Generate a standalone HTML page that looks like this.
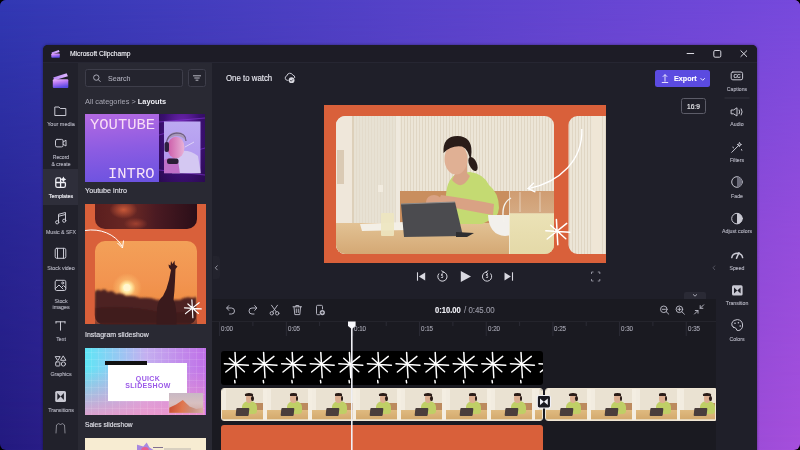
<!DOCTYPE html>
<html><head><meta charset="utf-8">
<style>
*{margin:0;padding:0;box-sizing:border-box}
html,body{width:800px;height:450px;overflow:hidden;background:#000;font-family:"Liberation Sans",sans-serif}
.a{position:absolute}
.t{position:absolute;white-space:nowrap;line-height:1;will-change:transform}
svg{position:absolute;left:0;top:0;overflow:visible}
</style></head><body>
<div class="a" style="left:0;top:0;width:800px;height:450px;border-radius:6px;overflow:hidden"><div class="a" style="left:0;top:0;width:800px;height:450px;background:linear-gradient(to right,#231a80,#5a35b8 50%,#a64fdc)"></div><div class="a" style="left:0;top:0;width:800px;height:450px;background:linear-gradient(to right,#3138b3,#5542c8 50%,#7649dc);-webkit-mask-image:linear-gradient(to bottom,#000,rgba(0,0,0,0.38) 50%,transparent);"></div></div><div class="a" style="left:43px;top:45px;width:714.00px;height:415.00px;background:#1d1c26;border-radius:5px 5px 0 0;box-shadow:0 0 3px rgba(0,0,0,0.45)"></div><div class="a" style="left:43px;top:45px;width:714.00px;height:17.00px;background:#1d1c26;border-radius:5px 5px 0 0"></div><div class="a" style="left:43px;top:62px;width:714.00px;height:1.00px;background:#262632"></div><div class="a" style="left:43px;top:63px;width:35.00px;height:387.00px;background:#21212b"></div><div class="a" style="left:78px;top:63px;width:134.00px;height:387.00px;background:#292933"></div><div class="a" style="left:212px;top:63px;width:504.00px;height:236.00px;background:#1f1f29"></div><div class="a" style="left:212px;top:299px;width:504.00px;height:151.00px;background:#1a1a21"></div><div class="a" style="left:716px;top:63px;width:41.00px;height:387.00px;background:#1f1f29"></div><div class="t" style="left:69.70px;top:50.58px;font-size:6.7px;color:#f0f0f6;font-weight:400;font-family:'Liberation Sans';transform:scaleY(1.08);transform-origin:0 5.67px;-webkit-text-stroke:0.12px #f0f0f6;">Microsoft Clipchamp</div><div class="a" style="left:43px;top:169px;width:35.00px;height:36.00px;background:#2e2e3a"></div><div class="t" style="left:0.50px;width:120px;text-align:center;top:122.24px;font-size:5.5px;color:#b4b4c0;font-weight:400;font-family:'Liberation Sans';transform:scaleY(1.08);transform-origin:0 4.66px;-webkit-text-stroke:0.12px #b4b4c0;">Your media</div><div class="t" style="left:0.50px;width:120px;text-align:center;top:154.98px;font-size:5.1px;color:#b4b4c0;font-weight:400;font-family:'Liberation Sans';transform:scaleY(1.08);transform-origin:0 4.32px;-webkit-text-stroke:0.12px #b4b4c0;">Record</div><div class="t" style="left:0.50px;width:120px;text-align:center;top:161.88px;font-size:5.1px;color:#b4b4c0;font-weight:400;font-family:'Liberation Sans';transform:scaleY(1.08);transform-origin:0 4.32px;-webkit-text-stroke:0.12px #b4b4c0;">&amp; create</div><div class="t" style="left:0.50px;width:120px;text-align:center;top:194.33px;font-size:5.4px;color:#f0f0f6;font-weight:400;font-family:'Liberation Sans';transform:scaleY(1.08);transform-origin:0 4.57px;-webkit-text-stroke:0.12px #f0f0f6;">Templates</div><div class="t" style="left:0.50px;width:120px;text-align:center;top:229.80px;font-size:5.2px;color:#b4b4c0;font-weight:400;font-family:'Liberation Sans';transform:scaleY(1.08);transform-origin:0 4.40px;-webkit-text-stroke:0.12px #b4b4c0;">Music &amp; SFX</div><div class="t" style="left:0.50px;width:120px;text-align:center;top:266.11px;font-size:5.3px;color:#b4b4c0;font-weight:400;font-family:'Liberation Sans';transform:scaleY(1.08);transform-origin:0 4.49px;-webkit-text-stroke:0.12px #b4b4c0;">Stock video</div><div class="t" style="left:0.50px;width:120px;text-align:center;top:298.61px;font-size:5.3px;color:#b4b4c0;font-weight:400;font-family:'Liberation Sans';transform:scaleY(1.08);transform-origin:0 4.49px;-webkit-text-stroke:0.12px #b4b4c0;">Stock</div><div class="t" style="left:0.50px;width:120px;text-align:center;top:304.81px;font-size:5.3px;color:#b4b4c0;font-weight:400;font-family:'Liberation Sans';transform:scaleY(1.08);transform-origin:0 4.49px;-webkit-text-stroke:0.12px #b4b4c0;">images</div><div class="t" style="left:0.50px;width:120px;text-align:center;top:337.01px;font-size:5.3px;color:#b4b4c0;font-weight:400;font-family:'Liberation Sans';transform:scaleY(1.08);transform-origin:0 4.49px;-webkit-text-stroke:0.12px #b4b4c0;">Text</div><div class="t" style="left:0.50px;width:120px;text-align:center;top:371.91px;font-size:5.3px;color:#b4b4c0;font-weight:400;font-family:'Liberation Sans';transform:scaleY(1.08);transform-origin:0 4.49px;-webkit-text-stroke:0.12px #b4b4c0;">Graphics</div><div class="t" style="left:0.50px;width:120px;text-align:center;top:407.81px;font-size:5.3px;color:#b4b4c0;font-weight:400;font-family:'Liberation Sans';transform:scaleY(1.08);transform-origin:0 4.49px;-webkit-text-stroke:0.12px #b4b4c0;">Transitions</div><div class="a" style="left:85px;top:69px;width:98.00px;height:18.30px;background:#24242e;border:1px solid #3e3e4a;border-radius:2.5px"></div><div class="t" style="left:107.75px;top:75.99px;font-size:7.1px;color:#a8a8b4;font-weight:400;font-family:'Liberation Sans';transform:scaleY(1.08);transform-origin:0 6.01px;-webkit-text-stroke:0.12px #a8a8b4;">Search</div><div class="a" style="left:188.3px;top:69px;width:17.50px;height:18.30px;background:#24242e;border:1px solid #3e3e4a;border-radius:2.5px"></div><div class="t" style="left:85px;top:97.74px;font-size:7.4px;color:#a8a8b4">All categories &gt; <span style="color:#f0f0f6;font-weight:700">Layouts</span></div><div class="t" style="left:85.00px;top:186.81px;font-size:7.2px;color:#e0e0e8;font-weight:400;font-family:'Liberation Sans';transform:scaleY(1.08);transform-origin:0 6.09px;-webkit-text-stroke:0.12px #e0e0e8;">Youtube intro</div><div class="t" style="left:85.00px;top:331.07px;font-size:7.0px;color:#e0e0e8;font-weight:400;font-family:'Liberation Sans';transform:scaleY(1.08);transform-origin:0 5.93px;-webkit-text-stroke:0.12px #e0e0e8;">Instagram slideshow</div><div class="t" style="left:85.00px;top:421.67px;font-size:6.65px;color:#e0e0e8;font-weight:400;font-family:'Liberation Sans';transform:scaleY(1.08);transform-origin:0 5.63px;-webkit-text-stroke:0.12px #e0e0e8;">Sales slideshow</div><div class="a" style="left:85px;top:114px;width:120.00px;height:67.50px;overflow:hidden;background:#34106a"><div class="a" style="left:0px;top:0px;width:74px;height:67.5px;background:linear-gradient(175deg,#b46ae2,#8c5ce2 50%,#6a52e0)"></div><div class="a" style="left:74px;top:0px;width:46px;height:67.5px;background:radial-gradient(ellipse at 50% 30%,#7a2ac0,#3a0f70 60%,#2a0a50)"></div></div><svg width="800" height="450" viewBox="0 0 800 450"><defs><linearGradient id="ytp" x1="0" y1="0" x2="0" y2="1"><stop offset="0" stop-color="#bcaaf2"/><stop offset="0.6" stop-color="#b49cf0"/><stop offset="1" stop-color="#b890e8"/></linearGradient><clipPath id="ytc"><rect x="164" y="121.3" width="36.7" height="52"/></clipPath></defs><path d="M159,122 L205,118 M159,170 L205,175 M159,135 L166,133 M198,150 L205,148" stroke="#8a3ae0" stroke-width="0.8" opacity="0.7"/><g clip-path="url(#ytc)"><rect x="164" y="121.3" width="36.7" height="52" fill="url(#ytp)"/><path d="M176,152 Q188,148 198,156 L201,174 L172,174 Z" fill="#d4c8f2"/><path d="M164,160 Q170,156 178,160 L180,174 L164,174 Z" fill="#c070c8"/><linearGradient id="ytf" x1="0" y1="0" x2="1" y2="0"><stop offset="0" stop-color="#cc5aa8"/><stop offset="1" stop-color="#e8b4d8"/></linearGradient><ellipse cx="176" cy="147.5" rx="8.5" ry="10.8" fill="url(#ytf)"/><path d="M167,141 Q168,132 177,132 Q186,132 186,141 Q182,136 177,136 Q171,136 167,141 Z" fill="#a898b8"/><path d="M166.5,146 Q166,134 176.5,133 Q186,133 186,141" stroke="#6a5a80" stroke-width="1.2" fill="none"/><rect x="164.5" y="142" width="4.5" height="10" rx="2" fill="#2e2040"/><path d="M185,147 L194,142" stroke="#e8e0f8" stroke-width="0.8"/><rect x="167" y="158.5" width="11.5" height="5.5" rx="2" fill="#2a1e36"/></g></svg><div class="t" style="left:89.60px;top:118.08px;font-size:15.5px;color:#f8dcf6;font-weight:400;font-family:'Liberation Mono';">YOUTUBE</div><div class="t" style="left:108.00px;top:166.68px;font-size:15.5px;color:#f8e4f8;font-weight:400;font-family:'Liberation Mono';">INTRO</div><div class="a" style="left:85px;top:204.3px;width:120.80px;height:120.20px;overflow:hidden;background:#d9603a"><div class="a" style="left:9.6px;top:-10px;width:102px;height:34.4px;border-radius:0 0 10px 10px;background:radial-gradient(ellipse 14px 9px at 28% 45%,#c85838,rgba(160,60,40,0) 100%),radial-gradient(ellipse 12px 6px at 40% 85%,#a04030,rgba(160,60,40,0) 100%),linear-gradient(90deg,#5a1e1e,#6a2824 35%,#4a1a22 60%,#2a0e18)"></div><div class="a" style="left:9.6px;top:36.7px;width:102px;height:90px;border-radius:10px 10px 0 0;background:linear-gradient(#f3a058,#f29450 45%,#f09048 62%,#c86038 78%,#5a2a28)"></div><div class="a" style="left:26.9px;top:68.4px;width:30px;height:30px;border-radius:50%;background:radial-gradient(#fffbe8,#ffe8a0 22%,rgba(255,200,120,0.5) 40%,rgba(255,170,90,0) 70%)"></div></div><div class="a" style="left:85px;top:348px;width:120.60px;height:67.00px;overflow:hidden;background:linear-gradient(90deg,#5ee6f6,#c4b0f0 50%,#c070e8)"><div class="a" style="left:0px;top:0px;width:120px;height:67px;background:linear-gradient(to bottom,rgba(240,160,200,0) 30%,rgba(240,150,200,0.85))"></div><div class="a" style="left:0px;top:0px;width:120px;height:67px;background:repeating-linear-gradient(90deg,rgba(255,255,255,0) 0 6px,rgba(255,255,255,0.10) 6px 7px),repeating-linear-gradient(0deg,rgba(255,255,255,0) 0 6px,rgba(255,255,255,0.10) 6px 7px)"></div><div class="a" style="left:22.7px;top:14.8px;width:79.5px;height:38.2px;background:#fff"></div><div class="a" style="left:19.8px;top:12.7px;width:42.7px;height:4.1px;background:#111"></div><div class="a" style="left:84.3px;top:44.8px;width:33.8px;height:20px;background:linear-gradient(#c8b8c4,#d8c0c0 50%,#d0a8a0)"></div><div class="a" style="left:84.3px;top:52px;width:33.8px;height:12.8px;background:linear-gradient(100deg,#c84a30,#e07850 40%,#c89080 70%,#d8b0a8);clip-path:polygon(0 100%,0 60%,20% 35%,40% 0,60% 50%,80% 70%,100% 60%,100% 100%)"></div></div><div class="t" style="left:87.5px;width:120px;text-align:center;top:376.2px;font-size:7px;line-height:6.6px;color:#9a58e8;font-weight:700;letter-spacing:0.35px">QUICK<br>SLIDESHOW</div><div class="a" style="left:85px;top:438.4px;width:120.60px;height:21.60px;background:#f7ecd2"><div class="a" style="left:51.5px;top:4px;width:17px;height:14px;background:#a888e0;clip-path:polygon(0 15%,40% 30%,60% 0,75% 35%,100% 55%,100% 100%,0 100%)"></div><div class="a" style="left:56px;top:9px;width:8px;height:8px;background:#e86090;border-radius:50%"></div><div class="a" style="left:68px;top:8.5px;width:10px;height:1.2px;background:#807090"></div><div class="a" style="left:79px;top:10px;width:27px;height:3px;background:#d8d0c0"></div></div><div class="t" style="left:225.75px;top:74.85px;font-size:7.85px;color:#e8e8f0;font-weight:400;font-family:'Liberation Sans';transform:scaleY(1.08);transform-origin:0 6.65px;-webkit-text-stroke:0.12px #e8e8f0;">One to watch</div><div class="a" style="left:654.7px;top:69.6px;width:55.60px;height:17.40px;background:#5b4be0;border-radius:2.5px"></div><div class="t" style="left:674.00px;top:75.21px;font-size:7.2px;color:#ffffff;font-weight:700;font-family:'Liberation Sans';transform:scaleY(1.08);transform-origin:0 6.09px;-webkit-text-stroke:0.12px #ffffff;">Export</div><div class="a" style="left:680.7px;top:98.3px;width:25.60px;height:16.10px;border:1px solid #5c5c68;border-radius:2.5px"></div><div class="t" style="left:686.80px;top:104.21px;font-size:6.6px;color:#f0f0f4;font-weight:400;font-family:'Liberation Sans';transform:scaleY(1.08);transform-origin:0 5.59px;-webkit-text-stroke:0.12px #f0f0f4;">16:9</div><div class="a" style="left:324px;top:105px;width:282.00px;height:158.00px;background:#d9603a"></div><svg width="800" height="450" viewBox="0 0 800 450"><defs><clipPath id="p1"><rect x="336" y="116" width="218" height="138" rx="9"/></clipPath><clipPath id="p2"><path d="M577.5,116 H606 V254 H577.5 A9,9 0 0 1 568.5,245 V125 A9,9 0 0 1 577.5,116 Z"/></clipPath><pattern id="str" x="0" y="0" width="3" height="10" patternUnits="userSpaceOnUse"><rect x="0" y="0" width="3" height="10" fill="#ece5d7"/><rect x="2" y="0" width="1" height="10" fill="#e0d6c4"/></pattern><linearGradient id="tbl" x1="0" y1="0" x2="0" y2="1"><stop offset="0" stop-color="#e2c294"/><stop offset="1" stop-color="#d4a874"/></linearGradient><linearGradient id="jug" x1="0" y1="0" x2="0" y2="1"><stop offset="0" stop-color="#f4f0e0" stop-opacity="0.15"/><stop offset="0.35" stop-color="#f0ecd8" stop-opacity="0.3"/><stop offset="0.36" stop-color="#ebe2b6"/><stop offset="1" stop-color="#e4d9a8"/></linearGradient></defs><g clip-path="url(#p1)"><rect x="336" y="116" width="218" height="138" fill="url(#str)"/><rect x="336" y="116" width="16" height="138" fill="#efe7da"/><rect x="352" y="116" width="2" height="138" fill="#ddd0ba"/><rect x="337" y="150" width="7" height="34" fill="#c9b396" opacity="0.55"/><rect x="354" y="116" width="44" height="110" fill="#e4ddd0" opacity="0.6"/><rect x="396" y="116" width="4" height="110" fill="#efe9de"/><rect x="400" y="191" width="154" height="32" fill="#c98e5e"/><rect x="336" y="223" width="218" height="31" fill="url(#tbl)"/><path d="M360,224 L404,222 L408,230 L362,231 Z" fill="#f3efe6"/><rect x="381" y="213" width="13" height="23" rx="1" fill="#ede6c0" opacity="0.9"/><rect x="378" y="185" width="5" height="7" fill="#f2ece0"/><ellipse cx="473" cy="164" rx="3.8" ry="7.5" transform="rotate(-25 473 164)" fill="#2a1c18"/><path d="M446,224 L446,195 Q447,178 458,173 L470,172 Q484,174 489,185 Q499,193 499,208 Q498,220 488,221 L482,224 Z" fill="#c4da72"/><path d="M452,180 Q462,192 470,176 L466,172 L456,172 Z" fill="#d7a486"/><rect x="455" y="163" width="12" height="14" fill="#d7a486"/><ellipse cx="456" cy="159" rx="11.5" ry="15.5" fill="#e0b094"/><path d="M443.5,153 Q442.5,136 457.5,136 Q472,136.5 471.5,152 L470.5,163 Q469,149 462,146.5 Q451,145 443.5,153 Z" fill="#2a1c18"/><path d="M494,204 Q470,199 441,195 L437,204 Q468,211 493,215 Z" fill="#d9a284"/><ellipse cx="434" cy="202" rx="8" ry="7" fill="#d9a284"/><path d="M401,204 L455,202 L463,236 L404,237 Z" fill="#4b4b4f"/><path d="M401,204 L455,202" stroke="#8c8c8c" stroke-width="1.2"/><path d="M456,232 L474,233 L467,237 L456,237 Z" fill="#2e2e30"/><path d="M488,215 H521 Q521,235 505,236 Q489,235 488,215 Z" fill="#f2f0ec"/><rect x="509" y="191" width="46" height="63" fill="url(#jug)"/><path d="M509.5,191 V254 M520,192 V212 M540,192 V212" stroke="#f8f6f0" stroke-width="0.8" opacity="0.7"/><path d="M511,198 Q500,204 504,222" stroke="#f4f2ec" stroke-width="1.4" fill="none"/></g><g clip-path="url(#p2)"><rect x="568" y="116" width="38" height="138" fill="url(#str)"/><rect x="592" y="116" width="9" height="138" fill="#efe6d6"/></g></svg><div class="a" style="left:212.7px;top:256px;width:7.30px;height:22.70px;background:#23232d;border-radius:0 3px 3px 0"></div><div class="t" style="left:434.75px;top:306.82px;font-size:7.6px;color:#f0f0f6;font-weight:700;font-family:'Liberation Sans';transform:scaleY(1.08);transform-origin:0 6.43px;-webkit-text-stroke:0.12px #f0f0f6;">0:10.00</div><div class="t" style="left:463.75px;top:306.56px;font-size:7.9px;color:#9a9aa6;font-weight:400;font-family:'Liberation Sans';transform:scaleY(1.08);transform-origin:0 6.69px;-webkit-text-stroke:0.12px #9a9aa6;">/ 0:45.00</div><div class="a" style="left:684px;top:292px;width:22.00px;height:7.00px;background:#2a2a35;border-radius:2px 2px 0 0"></div><div class="a" style="left:212px;top:321px;width:504.00px;height:1.00px;background:#24242c"></div><div class="t" style="left:221.00px;top:326.15px;font-size:6.2px;color:#a4a4b0;font-weight:400;font-family:'Liberation Sans';transform:scaleY(1.08);transform-origin:0 5.25px;-webkit-text-stroke:0.12px #a4a4b0;">0:00</div><div class="t" style="left:287.67px;top:326.15px;font-size:6.2px;color:#a4a4b0;font-weight:400;font-family:'Liberation Sans';transform:scaleY(1.08);transform-origin:0 5.25px;-webkit-text-stroke:0.12px #a4a4b0;">0:05</div><div class="t" style="left:354.34px;top:326.15px;font-size:6.2px;color:#a4a4b0;font-weight:400;font-family:'Liberation Sans';transform:scaleY(1.08);transform-origin:0 5.25px;-webkit-text-stroke:0.12px #a4a4b0;">0:10</div><div class="t" style="left:421.01px;top:326.15px;font-size:6.2px;color:#a4a4b0;font-weight:400;font-family:'Liberation Sans';transform:scaleY(1.08);transform-origin:0 5.25px;-webkit-text-stroke:0.12px #a4a4b0;">0:15</div><div class="t" style="left:487.68px;top:326.15px;font-size:6.2px;color:#a4a4b0;font-weight:400;font-family:'Liberation Sans';transform:scaleY(1.08);transform-origin:0 5.25px;-webkit-text-stroke:0.12px #a4a4b0;">0:20</div><div class="t" style="left:554.35px;top:326.15px;font-size:6.2px;color:#a4a4b0;font-weight:400;font-family:'Liberation Sans';transform:scaleY(1.08);transform-origin:0 5.25px;-webkit-text-stroke:0.12px #a4a4b0;">0:25</div><div class="t" style="left:621.02px;top:326.15px;font-size:6.2px;color:#a4a4b0;font-weight:400;font-family:'Liberation Sans';transform:scaleY(1.08);transform-origin:0 5.25px;-webkit-text-stroke:0.12px #a4a4b0;">0:30</div><div class="t" style="left:687.69px;top:326.15px;font-size:6.2px;color:#a4a4b0;font-weight:400;font-family:'Liberation Sans';transform:scaleY(1.08);transform-origin:0 5.25px;-webkit-text-stroke:0.12px #a4a4b0;">0:35</div><div class="a" style="left:221px;top:351px;width:322.00px;height:33.50px;background:#000;border-radius:3px"></div><div class="a" style="left:221px;top:425px;width:321.50px;height:30.00px;background:#d9603a;border-radius:3px"></div><div class="a" style="left:221px;top:388px;width:321.50px;height:32.70px;border-radius:3px;overflow:hidden;border:1px solid #f0e6d4"><div class="a" style="left:0.00px;top:0;width:45.25px;height:33px;overflow:hidden;background:#eae2d2"><div class="a" style="left:0px;top:0px;width:4px;height:33px;background:#f2ece0"></div><div class="a" style="left:32px;top:14px;width:13px;height:7px;background:#bc8a5e"></div><div class="a" style="left:0px;top:21px;width:46px;height:9px;background:linear-gradient(#dfba80,#d4aa6e)"></div><div class="a" style="left:0px;top:29.5px;width:46px;height:4px;background:#e6d6b8"></div><div class="a" style="left:20px;top:12px;width:15px;height:13px;border-radius:45% 45% 25% 25%;background:#bfcf66"></div><div class="a" style="left:23.5px;top:5px;width:6.5px;height:8.5px;border-radius:50%;background:#dcae90"></div><div class="a" style="left:23px;top:4.3px;width:7.5px;height:3.2px;border-radius:50% 50% 10% 10%;background:#2a1c18"></div><div class="a" style="left:29px;top:7px;width:2.6px;height:5px;border-radius:50%;background:#2a1c18"></div><div class="a" style="left:14px;top:18.5px;width:13px;height:8px;background:#4a3e3c;border-radius:1px;transform:skewX(-6deg)"></div><div class="a" style="left:41px;top:0px;width:4px;height:33px;background:#f4eee2"></div></div><div class="a" style="left:44.75px;top:0;width:45.25px;height:33px;overflow:hidden;background:#eae2d2"><div class="a" style="left:0px;top:0px;width:4px;height:33px;background:#f2ece0"></div><div class="a" style="left:32px;top:14px;width:13px;height:7px;background:#bc8a5e"></div><div class="a" style="left:0px;top:21px;width:46px;height:9px;background:linear-gradient(#dfba80,#d4aa6e)"></div><div class="a" style="left:0px;top:29.5px;width:46px;height:4px;background:#e6d6b8"></div><div class="a" style="left:20px;top:12px;width:15px;height:13px;border-radius:45% 45% 25% 25%;background:#bfcf66"></div><div class="a" style="left:23.5px;top:5px;width:6.5px;height:8.5px;border-radius:50%;background:#dcae90"></div><div class="a" style="left:23px;top:4.3px;width:7.5px;height:3.2px;border-radius:50% 50% 10% 10%;background:#2a1c18"></div><div class="a" style="left:29px;top:7px;width:2.6px;height:5px;border-radius:50%;background:#2a1c18"></div><div class="a" style="left:14px;top:18.5px;width:13px;height:8px;background:#4a3e3c;border-radius:1px;transform:skewX(-6deg)"></div><div class="a" style="left:41px;top:0px;width:4px;height:33px;background:#f4eee2"></div></div><div class="a" style="left:89.50px;top:0;width:45.25px;height:33px;overflow:hidden;background:#eae2d2"><div class="a" style="left:0px;top:0px;width:4px;height:33px;background:#f2ece0"></div><div class="a" style="left:32px;top:14px;width:13px;height:7px;background:#bc8a5e"></div><div class="a" style="left:0px;top:21px;width:46px;height:9px;background:linear-gradient(#dfba80,#d4aa6e)"></div><div class="a" style="left:0px;top:29.5px;width:46px;height:4px;background:#e6d6b8"></div><div class="a" style="left:20px;top:12px;width:15px;height:13px;border-radius:45% 45% 25% 25%;background:#bfcf66"></div><div class="a" style="left:23.5px;top:5px;width:6.5px;height:8.5px;border-radius:50%;background:#dcae90"></div><div class="a" style="left:23px;top:4.3px;width:7.5px;height:3.2px;border-radius:50% 50% 10% 10%;background:#2a1c18"></div><div class="a" style="left:29px;top:7px;width:2.6px;height:5px;border-radius:50%;background:#2a1c18"></div><div class="a" style="left:14px;top:18.5px;width:13px;height:8px;background:#4a3e3c;border-radius:1px;transform:skewX(-6deg)"></div><div class="a" style="left:41px;top:0px;width:4px;height:33px;background:#f4eee2"></div></div><div class="a" style="left:134.25px;top:0;width:45.25px;height:33px;overflow:hidden;background:#eae2d2"><div class="a" style="left:0px;top:0px;width:4px;height:33px;background:#f2ece0"></div><div class="a" style="left:32px;top:14px;width:13px;height:7px;background:#bc8a5e"></div><div class="a" style="left:0px;top:21px;width:46px;height:9px;background:linear-gradient(#dfba80,#d4aa6e)"></div><div class="a" style="left:0px;top:29.5px;width:46px;height:4px;background:#e6d6b8"></div><div class="a" style="left:20px;top:12px;width:15px;height:13px;border-radius:45% 45% 25% 25%;background:#bfcf66"></div><div class="a" style="left:23.5px;top:5px;width:6.5px;height:8.5px;border-radius:50%;background:#dcae90"></div><div class="a" style="left:23px;top:4.3px;width:7.5px;height:3.2px;border-radius:50% 50% 10% 10%;background:#2a1c18"></div><div class="a" style="left:29px;top:7px;width:2.6px;height:5px;border-radius:50%;background:#2a1c18"></div><div class="a" style="left:14px;top:18.5px;width:13px;height:8px;background:#4a3e3c;border-radius:1px;transform:skewX(-6deg)"></div><div class="a" style="left:41px;top:0px;width:4px;height:33px;background:#f4eee2"></div></div><div class="a" style="left:179.00px;top:0;width:45.25px;height:33px;overflow:hidden;background:#eae2d2"><div class="a" style="left:0px;top:0px;width:4px;height:33px;background:#f2ece0"></div><div class="a" style="left:32px;top:14px;width:13px;height:7px;background:#bc8a5e"></div><div class="a" style="left:0px;top:21px;width:46px;height:9px;background:linear-gradient(#dfba80,#d4aa6e)"></div><div class="a" style="left:0px;top:29.5px;width:46px;height:4px;background:#e6d6b8"></div><div class="a" style="left:20px;top:12px;width:15px;height:13px;border-radius:45% 45% 25% 25%;background:#bfcf66"></div><div class="a" style="left:23.5px;top:5px;width:6.5px;height:8.5px;border-radius:50%;background:#dcae90"></div><div class="a" style="left:23px;top:4.3px;width:7.5px;height:3.2px;border-radius:50% 50% 10% 10%;background:#2a1c18"></div><div class="a" style="left:29px;top:7px;width:2.6px;height:5px;border-radius:50%;background:#2a1c18"></div><div class="a" style="left:14px;top:18.5px;width:13px;height:8px;background:#4a3e3c;border-radius:1px;transform:skewX(-6deg)"></div><div class="a" style="left:41px;top:0px;width:4px;height:33px;background:#f4eee2"></div></div><div class="a" style="left:223.75px;top:0;width:45.25px;height:33px;overflow:hidden;background:#eae2d2"><div class="a" style="left:0px;top:0px;width:4px;height:33px;background:#f2ece0"></div><div class="a" style="left:32px;top:14px;width:13px;height:7px;background:#bc8a5e"></div><div class="a" style="left:0px;top:21px;width:46px;height:9px;background:linear-gradient(#dfba80,#d4aa6e)"></div><div class="a" style="left:0px;top:29.5px;width:46px;height:4px;background:#e6d6b8"></div><div class="a" style="left:20px;top:12px;width:15px;height:13px;border-radius:45% 45% 25% 25%;background:#bfcf66"></div><div class="a" style="left:23.5px;top:5px;width:6.5px;height:8.5px;border-radius:50%;background:#dcae90"></div><div class="a" style="left:23px;top:4.3px;width:7.5px;height:3.2px;border-radius:50% 50% 10% 10%;background:#2a1c18"></div><div class="a" style="left:29px;top:7px;width:2.6px;height:5px;border-radius:50%;background:#2a1c18"></div><div class="a" style="left:14px;top:18.5px;width:13px;height:8px;background:#4a3e3c;border-radius:1px;transform:skewX(-6deg)"></div><div class="a" style="left:41px;top:0px;width:4px;height:33px;background:#f4eee2"></div></div><div class="a" style="left:268.50px;top:0;width:45.25px;height:33px;overflow:hidden;background:#eae2d2"><div class="a" style="left:0px;top:0px;width:4px;height:33px;background:#f2ece0"></div><div class="a" style="left:32px;top:14px;width:13px;height:7px;background:#bc8a5e"></div><div class="a" style="left:0px;top:21px;width:46px;height:9px;background:linear-gradient(#dfba80,#d4aa6e)"></div><div class="a" style="left:0px;top:29.5px;width:46px;height:4px;background:#e6d6b8"></div><div class="a" style="left:20px;top:12px;width:15px;height:13px;border-radius:45% 45% 25% 25%;background:#bfcf66"></div><div class="a" style="left:23.5px;top:5px;width:6.5px;height:8.5px;border-radius:50%;background:#dcae90"></div><div class="a" style="left:23px;top:4.3px;width:7.5px;height:3.2px;border-radius:50% 50% 10% 10%;background:#2a1c18"></div><div class="a" style="left:29px;top:7px;width:2.6px;height:5px;border-radius:50%;background:#2a1c18"></div><div class="a" style="left:14px;top:18.5px;width:13px;height:8px;background:#4a3e3c;border-radius:1px;transform:skewX(-6deg)"></div><div class="a" style="left:41px;top:0px;width:4px;height:33px;background:#f4eee2"></div></div><div class="a" style="left:313.25px;top:0;width:45.25px;height:33px;overflow:hidden;background:#eae2d2"><div class="a" style="left:0px;top:0px;width:4px;height:33px;background:#f2ece0"></div><div class="a" style="left:32px;top:14px;width:13px;height:7px;background:#bc8a5e"></div><div class="a" style="left:0px;top:21px;width:46px;height:9px;background:linear-gradient(#dfba80,#d4aa6e)"></div><div class="a" style="left:0px;top:29.5px;width:46px;height:4px;background:#e6d6b8"></div><div class="a" style="left:20px;top:12px;width:15px;height:13px;border-radius:45% 45% 25% 25%;background:#bfcf66"></div><div class="a" style="left:23.5px;top:5px;width:6.5px;height:8.5px;border-radius:50%;background:#dcae90"></div><div class="a" style="left:23px;top:4.3px;width:7.5px;height:3.2px;border-radius:50% 50% 10% 10%;background:#2a1c18"></div><div class="a" style="left:29px;top:7px;width:2.6px;height:5px;border-radius:50%;background:#2a1c18"></div><div class="a" style="left:14px;top:18.5px;width:13px;height:8px;background:#4a3e3c;border-radius:1px;transform:skewX(-6deg)"></div><div class="a" style="left:41px;top:0px;width:4px;height:33px;background:#f4eee2"></div></div></div><div class="a" style="left:545px;top:388px;width:171.00px;height:32.70px;border-radius:3px 0 0 3px;overflow:hidden;border:1px solid #f0e6d4"><div class="a" style="left:0.00px;top:0;width:45.25px;height:33px;overflow:hidden;background:#eae2d2"><div class="a" style="left:0px;top:0px;width:4px;height:33px;background:#f2ece0"></div><div class="a" style="left:32px;top:14px;width:13px;height:7px;background:#bc8a5e"></div><div class="a" style="left:0px;top:21px;width:46px;height:9px;background:linear-gradient(#dfba80,#d4aa6e)"></div><div class="a" style="left:0px;top:29.5px;width:46px;height:4px;background:#e6d6b8"></div><div class="a" style="left:20px;top:12px;width:15px;height:13px;border-radius:45% 45% 25% 25%;background:#bfcf66"></div><div class="a" style="left:23.5px;top:5px;width:6.5px;height:8.5px;border-radius:50%;background:#dcae90"></div><div class="a" style="left:23px;top:4.3px;width:7.5px;height:3.2px;border-radius:50% 50% 10% 10%;background:#2a1c18"></div><div class="a" style="left:29px;top:7px;width:2.6px;height:5px;border-radius:50%;background:#2a1c18"></div><div class="a" style="left:14px;top:18.5px;width:13px;height:8px;background:#4a3e3c;border-radius:1px;transform:skewX(-6deg)"></div><div class="a" style="left:41px;top:0px;width:4px;height:33px;background:#f4eee2"></div></div><div class="a" style="left:44.75px;top:0;width:45.25px;height:33px;overflow:hidden;background:#eae2d2"><div class="a" style="left:0px;top:0px;width:4px;height:33px;background:#f2ece0"></div><div class="a" style="left:32px;top:14px;width:13px;height:7px;background:#bc8a5e"></div><div class="a" style="left:0px;top:21px;width:46px;height:9px;background:linear-gradient(#dfba80,#d4aa6e)"></div><div class="a" style="left:0px;top:29.5px;width:46px;height:4px;background:#e6d6b8"></div><div class="a" style="left:20px;top:12px;width:15px;height:13px;border-radius:45% 45% 25% 25%;background:#bfcf66"></div><div class="a" style="left:23.5px;top:5px;width:6.5px;height:8.5px;border-radius:50%;background:#dcae90"></div><div class="a" style="left:23px;top:4.3px;width:7.5px;height:3.2px;border-radius:50% 50% 10% 10%;background:#2a1c18"></div><div class="a" style="left:29px;top:7px;width:2.6px;height:5px;border-radius:50%;background:#2a1c18"></div><div class="a" style="left:14px;top:18.5px;width:13px;height:8px;background:#4a3e3c;border-radius:1px;transform:skewX(-6deg)"></div><div class="a" style="left:41px;top:0px;width:4px;height:33px;background:#f4eee2"></div></div><div class="a" style="left:89.50px;top:0;width:45.25px;height:33px;overflow:hidden;background:#eae2d2"><div class="a" style="left:0px;top:0px;width:4px;height:33px;background:#f2ece0"></div><div class="a" style="left:32px;top:14px;width:13px;height:7px;background:#bc8a5e"></div><div class="a" style="left:0px;top:21px;width:46px;height:9px;background:linear-gradient(#dfba80,#d4aa6e)"></div><div class="a" style="left:0px;top:29.5px;width:46px;height:4px;background:#e6d6b8"></div><div class="a" style="left:20px;top:12px;width:15px;height:13px;border-radius:45% 45% 25% 25%;background:#bfcf66"></div><div class="a" style="left:23.5px;top:5px;width:6.5px;height:8.5px;border-radius:50%;background:#dcae90"></div><div class="a" style="left:23px;top:4.3px;width:7.5px;height:3.2px;border-radius:50% 50% 10% 10%;background:#2a1c18"></div><div class="a" style="left:29px;top:7px;width:2.6px;height:5px;border-radius:50%;background:#2a1c18"></div><div class="a" style="left:14px;top:18.5px;width:13px;height:8px;background:#4a3e3c;border-radius:1px;transform:skewX(-6deg)"></div><div class="a" style="left:41px;top:0px;width:4px;height:33px;background:#f4eee2"></div></div><div class="a" style="left:134.25px;top:0;width:45.25px;height:33px;overflow:hidden;background:#eae2d2"><div class="a" style="left:0px;top:0px;width:4px;height:33px;background:#f2ece0"></div><div class="a" style="left:32px;top:14px;width:13px;height:7px;background:#bc8a5e"></div><div class="a" style="left:0px;top:21px;width:46px;height:9px;background:linear-gradient(#dfba80,#d4aa6e)"></div><div class="a" style="left:0px;top:29.5px;width:46px;height:4px;background:#e6d6b8"></div><div class="a" style="left:20px;top:12px;width:15px;height:13px;border-radius:45% 45% 25% 25%;background:#bfcf66"></div><div class="a" style="left:23.5px;top:5px;width:6.5px;height:8.5px;border-radius:50%;background:#dcae90"></div><div class="a" style="left:23px;top:4.3px;width:7.5px;height:3.2px;border-radius:50% 50% 10% 10%;background:#2a1c18"></div><div class="a" style="left:29px;top:7px;width:2.6px;height:5px;border-radius:50%;background:#2a1c18"></div><div class="a" style="left:14px;top:18.5px;width:13px;height:8px;background:#4a3e3c;border-radius:1px;transform:skewX(-6deg)"></div><div class="a" style="left:41px;top:0px;width:4px;height:33px;background:#f4eee2"></div></div></div><div class="t" style="left:382.00px;width:120px;text-align:center;top:275.41px;font-size:4.6px;color:#d8d8e0;font-weight:400;font-family:'Liberation Sans';transform:scaleY(1.08);transform-origin:0 3.89px;-webkit-text-stroke:0.12px #d8d8e0;">5</div><div class="t" style="left:427.00px;width:120px;text-align:center;top:275.41px;font-size:4.6px;color:#d8d8e0;font-weight:400;font-family:'Liberation Sans';transform:scaleY(1.08);transform-origin:0 3.89px;-webkit-text-stroke:0.12px #d8d8e0;">5</div><div class="t" style="left:676.90px;width:120px;text-align:center;top:73.97px;font-size:5px;color:#c8c8d2;font-weight:700;font-family:'Liberation Sans';transform:scaleY(1.08);transform-origin:0 4.23px;-webkit-text-stroke:0.12px #c8c8d2;">CC</div><svg width="800" height="450" viewBox="0 0 800 450"><defs><linearGradient id="lg" x1="0" y1="0" x2="1" y2="1"><stop offset="0" stop-color="#f6b8ff"/><stop offset="0.45" stop-color="#a868f2"/><stop offset="1" stop-color="#5a3ad8"/></linearGradient><linearGradient id="lg2" x1="0" y1="0" x2="1" y2="0"><stop offset="0" stop-color="#b888f8"/><stop offset="1" stop-color="#e0b8ff"/></linearGradient><linearGradient id="lg3" x1="0" y1="0" x2="0.3" y2="1"><stop offset="0" stop-color="#f0b8ff"/><stop offset="0.45" stop-color="#b878f4"/><stop offset="1" stop-color="#5a4ae2"/></linearGradient><clipPath id="t1"><rect x="221" y="351" width="322" height="34" rx="3"/></clipPath></defs><path d="M51.5,52.6 L58.8,50 L59.6,51.9 L52.3,54.3 Z" fill="url(#lg2)"/><rect x="51.3" y="53.6" width="8.5" height="4.2" rx="0.7" fill="url(#lg3)"/><path d="M686.7,53.5 H694.1" stroke="#d8d8e0" stroke-width="1"/><rect x="713.8" y="50.5" width="7" height="6.7" rx="1.3" fill="none" stroke="#d8d8e0" stroke-width="1"/><path d="M740.6,50.5 L747,56.8 M747,50.5 L740.6,56.8" stroke="#d8d8e0" stroke-width="1"/><path d="M53.2,77.6 L66.6,73.2 L67.9,76.3 L54.4,80.2 Z" fill="url(#lg2)"/><rect x="52.8" y="79.2" width="15.5" height="8.9" rx="1" fill="url(#lg3)"/><path d="M55.2,107 h3.8 l1.3,1.5 h5.5 v7 h-10.6 z" fill="none" stroke="#c8c8d2" stroke-width="1" stroke-linecap="round" stroke-linejoin="round"/><rect x="55.5" y="139.4" width="7.6" height="7.5" rx="1.5" fill="none" stroke="#c8c8d2" stroke-width="1" stroke-linecap="round" stroke-linejoin="round"/><path d="M63.1,142 L66,140.2 V146 L63.1,144.3" fill="none" stroke="#c8c8d2" stroke-width="1" stroke-linecap="round" stroke-linejoin="round"/><path d="M60.6,177.9 H57.4 A1.6,1.6 0 0 0 55.8,179.5 V185.7 A1.6,1.6 0 0 0 57.4,187.3 H63.8 A1.6,1.6 0 0 0 65.4,185.7 V182.5 M60.6,177.9 V187.3 M55.8,182.5 H65.4" fill="none" stroke="#f0f0f6" stroke-width="1.3" stroke-linejoin="round"/><path d="M63.4,176.6 Q63.9,178.9 66.2,179.4 Q63.9,179.9 63.4,182.2 Q62.9,179.9 60.6,179.4 Q62.9,178.9 63.4,176.6 Z" fill="#f0f0f6"/><path d="M58.5,222 V214.3 L65.5,212.5 V220.5" fill="none" stroke="#c8c8d2" stroke-width="1" stroke-linecap="round" stroke-linejoin="round"/><circle cx="57.2" cy="222.3" r="1.6" fill="none" stroke="#c8c8d2" stroke-width="1" stroke-linecap="round" stroke-linejoin="round"/><circle cx="64.2" cy="220.7" r="1.6" fill="none" stroke="#c8c8d2" stroke-width="1" stroke-linecap="round" stroke-linejoin="round"/><path d="M58.5,216.3 L65.5,214.5" fill="none" stroke="#c8c8d2" stroke-width="1" stroke-linecap="round" stroke-linejoin="round"/><rect x="55.2" y="248.3" width="10.6" height="10" rx="1.5" fill="none" stroke="#c8c8d2" stroke-width="1" stroke-linecap="round" stroke-linejoin="round"/><path d="M57.5,248.3 V258.3 M63.5,248.3 V258.3" fill="none" stroke="#c8c8d2" stroke-width="1" stroke-linecap="round" stroke-linejoin="round"/><rect x="55.2" y="280.3" width="10.6" height="10.2" rx="1.5" fill="none" stroke="#c8c8d2" stroke-width="1" stroke-linecap="round" stroke-linejoin="round"/><path d="M55.5,288.5 L59,285 L63,289 M61.5,287.5 L63.5,285.5 L65.8,287.8" fill="none" stroke="#c8c8d2" stroke-width="1" stroke-linecap="round" stroke-linejoin="round"/><circle cx="62.7" cy="283" r="1" fill="none" stroke="#c8c8d2" stroke-width="1" stroke-linecap="round" stroke-linejoin="round"/><path d="M56,321.8 H65 M60.5,321.8 V330.2 M56,321.8 V323.2 M65,321.8 V323.2" fill="none" stroke="#c8c8d2" stroke-width="1" stroke-linecap="round" stroke-linejoin="round"/><path d="M55.6,356.6 H60.2 L57.9,360.3 Z" fill="none" stroke="#c8c8d2" stroke-width="1" stroke-linecap="round" stroke-linejoin="round"/><path d="M63.4,356.2 L65.9,360.3 H60.9 Z" fill="none" stroke="#c8c8d2" stroke-width="1" stroke-linecap="round" stroke-linejoin="round"/><rect x="55.7" y="361.9" width="4.1" height="4.1" rx="0.6" fill="none" stroke="#c8c8d2" stroke-width="1" stroke-linecap="round" stroke-linejoin="round"/><circle cx="63.4" cy="364" r="2.1" fill="none" stroke="#c8c8d2" stroke-width="1" stroke-linecap="round" stroke-linejoin="round"/><rect x="55.2" y="391" width="10.8" height="11" rx="1.6" fill="#c8c8d2"/><path d="M57.3,393 L60.6,396.5 L57.3,400 Z M63.9,393 L60.6,396.5 L63.9,400 Z" fill="#21212b"/><path d="M56,433 L56.5,425 Q58.5,422.5 60.5,424.5 Q62.5,422.5 64.5,425 L65,433" fill="none" stroke="#c8c8d2" stroke-width="1" stroke-linecap="round" stroke-linejoin="round" opacity="0.6"/><circle cx="96.3" cy="77.6" r="2.7" fill="none" stroke="#b8b8c4" stroke-width="0.9"/><path d="M98.3,79.6 L100.5,81.8" stroke="#b8b8c4" stroke-width="0.9"/><path d="M193,75.8 H201 M194.3,78 H199.7 M195.6,80.2 H198.4" stroke="#c8c8d2" stroke-width="0.9"/><path d="M288,80.3 H287.2 A2.3,2.3 0 0 1 286.9,75.8 A3.1,3.1 0 0 1 292.8,75.1 A2.3,2.3 0 0 1 294.8,77.6" fill="none" stroke="#c8c8d2" stroke-width="1" stroke-linecap="round" stroke-linejoin="round"/><circle cx="291.6" cy="80.2" r="2.9" fill="#d8d8e0"/><path d="M290.2,80.2 L291.2,81.2 L293,79.3" stroke="#1f1f29" stroke-width="0.8" fill="none"/><path d="M665,81.6 V74.6 M662.8,76.8 L665,74.6 L667.2,76.8 M661.8,82.5 H668.2" stroke="#f4f0ff" stroke-width="0.9" fill="none"/><path d="M700.6,78.2 L702.7,80.3 L704.8,78.2" stroke="#fff" stroke-width="0.9" fill="none"/><path d="M581.8,129 C583,160 560,182 528.5,188.6" fill="none" stroke="#fff" stroke-width="1.3"/><path d="M533.5,183.2 L528,188.6 L535,191.8" fill="none" stroke="#fff" stroke-width="1.3" stroke-linecap="round"/><path d="M556.40,219.40 L557.80,244.80 M545.80,230.80 L569.80,232.30 M566.70,223.40 L547.20,239.00 M550.70,225.20 L565.80,238.80" stroke="#fff" stroke-width="1.5" stroke-linecap="round" fill="none"/><path d="M85,230.5 C100,228 115,234 122,246 M117.5,243 L122.5,248 L123.5,240.5" fill="none" stroke="#fff" stroke-width="1"/><filter id="bl1" x="-10%" y="-10%" width="120%" height="120%"><feGaussianBlur stdDeviation="0.9"/></filter><clipPath id="igc"><rect x="94.6" y="241" width="102" height="84" rx="10"/></clipPath><g clip-path="url(#igc)" filter="url(#bl1)"><path d="M94.6,324.5 V292 Q98,288 101,291 Q104,287 108,292 Q112,289 116,294 Q121,292 126,296 Q134,295 140,298 Q150,297 157,300 L180,300 Q186,296 192,298 L196.5,297 V324.5 Z" fill="#4e2224"/><path d="M94.6,324.5 V308 Q130,305 160,312 Q180,314 196.5,310 V324.5 Z" fill="#3e1c1c" opacity="0.8"/></g><path d="M156.5,324.5 L157,308 Q158,300 163,296 Q167,289 169,280 L171,270 L169,267.5 L168.5,264.5 L170.5,265.5 L171,261 L172.5,264 L174.5,260.5 L174.8,264.5 L177.5,266.5 L175.5,269 L175,281 Q174.5,292 173.5,300 Q177,306 176.5,324.5 Z" fill="#3a1a1c"/><circle cx="126.9" cy="287.7" r="3.6" fill="#fff6d0"/><path d="M191.88,299.88 L192.86,317.66 M184.46,307.86 L201.26,308.91 M199.09,302.68 L185.44,313.60 M187.89,303.94 L198.46,313.46" stroke="#fff" stroke-width="1.2" stroke-linecap="round" fill="none"/><path d="M417.5,272.3 V280.7" stroke="#d8d8e0" stroke-width="1.1"/><path d="M425.2,272.5 L418.8,276.5 L425.2,280.5 Z" fill="#d8d8e0"/><path d="M439,273.5 A4.6,4.6 0 1 0 443,272" fill="none" stroke="#d8d8e0" stroke-width="1"/><path d="M441.3,270.7 L443.6,272 L441.6,273.8" fill="none" stroke="#d8d8e0" stroke-width="0.9"/><path d="M460.8,271 L471,276.5 L460.8,282 Z" fill="#d8d8e0"/><path d="M490.5,273.5 A4.6,4.6 0 1 1 486.5,272" fill="none" stroke="#d8d8e0" stroke-width="1"/><path d="M488.2,270.7 L485.9,272 L487.9,273.8" fill="none" stroke="#d8d8e0" stroke-width="0.9"/><path d="M512.5,272.3 V280.7" stroke="#d8d8e0" stroke-width="1.1"/><path d="M504.5,272.5 L510.9,276.5 L504.5,280.5 Z" fill="#d8d8e0"/><path d="M591.5,274 V272 H593.5 M597.8,272 H599.8 V274 M599.8,279 V281 H597.8 M593.5,281 H591.5 V279" fill="none" stroke="#9a9aa6" stroke-width="0.9"/><path d="M217.5,265.5 L215.3,267.8 L217.5,270.1" fill="none" stroke="#b0b0bc" stroke-width="0.8"/><path d="M715,265.6 L713,267.8 L715,270" fill="none" stroke="#5a5a66" stroke-width="0.9"/><path d="M227,308 H231.5 A3,3 0 0 1 231.5,314 H229.5 M228.8,305.6 L226.6,308 L228.8,310.4" fill="none" stroke="#b8b8c4" stroke-width="0.95" stroke-linecap="round" stroke-linejoin="round"/><path d="M256.5,308 H252 A3,3 0 0 0 252,314 H254 M254.7,305.6 L256.9,308 L254.7,310.4" fill="none" stroke="#b8b8c4" stroke-width="0.95" stroke-linecap="round" stroke-linejoin="round"/><circle cx="271.8" cy="313.3" r="1.7" fill="none" stroke="#b8b8c4" stroke-width="0.95" stroke-linecap="round" stroke-linejoin="round"/><circle cx="277.2" cy="313.3" r="1.7" fill="none" stroke="#b8b8c4" stroke-width="0.95" stroke-linecap="round" stroke-linejoin="round"/><path d="M272.8,311.8 L277.5,305.2 M276.2,311.8 L271.5,305.2" fill="none" stroke="#b8b8c4" stroke-width="0.95" stroke-linecap="round" stroke-linejoin="round"/><path d="M293,306.8 H301.6 M295.8,306.8 V305.5 H298.8 V306.8 M294,306.8 L294.8,314.6 H299.8 L300.6,306.8 M296.3,309 V312.5 M298.3,309 V312.5" fill="none" stroke="#b8b8c4" stroke-width="0.95" stroke-linecap="round" stroke-linejoin="round"/><path d="M322.5,309 V306.5 A1.2,1.2 0 0 0 321.3,305.3 H317.7 A1.2,1.2 0 0 0 316.5,306.5 V313.5 A1.2,1.2 0 0 0 317.7,314.7 H319.5" fill="none" stroke="#b8b8c4" stroke-width="0.95" stroke-linecap="round" stroke-linejoin="round"/><circle cx="322.3" cy="312.6" r="2.6" fill="#b8b8c4"/><path d="M322.3,311.2 V314 M320.9,312.6 H323.7" stroke="#1a1a21" stroke-width="0.7"/><circle cx="663.8" cy="309.3" r="3.3" fill="none" stroke="#b8b8c4" stroke-width="0.95" stroke-linecap="round" stroke-linejoin="round"/><path d="M666.2,311.7 L668.8,314.2 M662.2,309.3 H665.4" fill="none" stroke="#b8b8c4" stroke-width="0.95" stroke-linecap="round" stroke-linejoin="round"/><circle cx="679.4" cy="309.3" r="3.3" fill="none" stroke="#b8b8c4" stroke-width="0.95" stroke-linecap="round" stroke-linejoin="round"/><path d="M681.8,311.7 L684.4,314.2 M677.8,309.3 H681 M679.4,307.7 V310.9" fill="none" stroke="#b8b8c4" stroke-width="0.95" stroke-linecap="round" stroke-linejoin="round"/><path d="M694.5,314 L698,310.5 M695.3,310.5 H698 V313.2 M703.7,304.8 L700.2,308.3 M700.2,305.6 V308.3 H702.9" fill="none" stroke="#b8b8c4" stroke-width="0.95" stroke-linecap="round" stroke-linejoin="round"/><path d="M693,294.3 L695,296.2 L697,294.3" fill="none" stroke="#c8c8d2" stroke-width="0.8"/><path d="M219.6,322 V336" stroke="#2c2c36" stroke-width="1"/><path d="M252.9,322 V326" stroke="#2c2c36" stroke-width="1"/><path d="M286.3,322 V336" stroke="#2c2c36" stroke-width="1"/><path d="M319.6,322 V326" stroke="#2c2c36" stroke-width="1"/><path d="M352.9,322 V336" stroke="#2c2c36" stroke-width="1"/><path d="M386.2,322 V326" stroke="#2c2c36" stroke-width="1"/><path d="M419.6,322 V336" stroke="#2c2c36" stroke-width="1"/><path d="M452.9,322 V326" stroke="#2c2c36" stroke-width="1"/><path d="M486.2,322 V336" stroke="#2c2c36" stroke-width="1"/><path d="M519.6,322 V326" stroke="#2c2c36" stroke-width="1"/><path d="M552.9,322 V336" stroke="#2c2c36" stroke-width="1"/><path d="M586.2,322 V326" stroke="#2c2c36" stroke-width="1"/><path d="M619.6,322 V336" stroke="#2c2c36" stroke-width="1"/><path d="M652.9,322 V326" stroke="#2c2c36" stroke-width="1"/><path d="M686.2,322 V336" stroke="#2c2c36" stroke-width="1"/><g clip-path="url(#t1)"><path d="M235.00,352.40 L236.40,377.80 M224.40,363.80 L248.40,365.30 M245.30,356.40 L225.80,372.00 M229.30,358.20 L244.40,371.80 M234.70,380.60 L235.00,382.80" stroke="#fff" stroke-width="1.5" stroke-linecap="round" fill="none"/><path d="M263.60,352.40 L265.00,377.80 M253.00,363.80 L277.00,365.30 M273.90,356.40 L254.40,372.00 M257.90,358.20 L273.00,371.80 M263.30,380.60 L263.60,382.80" stroke="#fff" stroke-width="1.5" stroke-linecap="round" fill="none"/><path d="M292.20,352.40 L293.60,377.80 M281.60,363.80 L305.60,365.30 M302.50,356.40 L283.00,372.00 M286.50,358.20 L301.60,371.80 M291.90,380.60 L292.20,382.80" stroke="#fff" stroke-width="1.5" stroke-linecap="round" fill="none"/><path d="M320.80,352.40 L322.20,377.80 M310.20,363.80 L334.20,365.30 M331.10,356.40 L311.60,372.00 M315.10,358.20 L330.20,371.80 M320.50,380.60 L320.80,382.80" stroke="#fff" stroke-width="1.5" stroke-linecap="round" fill="none"/><path d="M349.40,352.40 L350.80,377.80 M338.80,363.80 L362.80,365.30 M359.70,356.40 L340.20,372.00 M343.70,358.20 L358.80,371.80 M349.10,380.60 L349.40,382.80" stroke="#fff" stroke-width="1.5" stroke-linecap="round" fill="none"/><path d="M378.00,352.40 L379.40,377.80 M367.40,363.80 L391.40,365.30 M388.30,356.40 L368.80,372.00 M372.30,358.20 L387.40,371.80 M377.70,380.60 L378.00,382.80" stroke="#fff" stroke-width="1.5" stroke-linecap="round" fill="none"/><path d="M406.60,352.40 L408.00,377.80 M396.00,363.80 L420.00,365.30 M416.90,356.40 L397.40,372.00 M400.90,358.20 L416.00,371.80 M406.30,380.60 L406.60,382.80" stroke="#fff" stroke-width="1.5" stroke-linecap="round" fill="none"/><path d="M435.20,352.40 L436.60,377.80 M424.60,363.80 L448.60,365.30 M445.50,356.40 L426.00,372.00 M429.50,358.20 L444.60,371.80 M434.90,380.60 L435.20,382.80" stroke="#fff" stroke-width="1.5" stroke-linecap="round" fill="none"/><path d="M463.80,352.40 L465.20,377.80 M453.20,363.80 L477.20,365.30 M474.10,356.40 L454.60,372.00 M458.10,358.20 L473.20,371.80 M463.50,380.60 L463.80,382.80" stroke="#fff" stroke-width="1.5" stroke-linecap="round" fill="none"/><path d="M492.40,352.40 L493.80,377.80 M481.80,363.80 L505.80,365.30 M502.70,356.40 L483.20,372.00 M486.70,358.20 L501.80,371.80 M492.10,380.60 L492.40,382.80" stroke="#fff" stroke-width="1.5" stroke-linecap="round" fill="none"/><path d="M521.00,352.40 L522.40,377.80 M510.40,363.80 L534.40,365.30 M531.30,356.40 L511.80,372.00 M515.30,358.20 L530.40,371.80 M520.70,380.60 L521.00,382.80" stroke="#fff" stroke-width="1.5" stroke-linecap="round" fill="none"/><path d="M549.60,352.40 L551.00,377.80 M539.00,363.80 L563.00,365.30 M559.90,356.40 L540.40,372.00 M543.90,358.20 L559.00,371.80 M549.30,380.60 L549.60,382.80" stroke="#fff" stroke-width="1.5" stroke-linecap="round" fill="none"/></g><rect x="537.3" y="395.5" width="13.2" height="12.5" rx="2" fill="#1a1a21" stroke="#f0f0f6" stroke-width="1.1"/><path d="M540,398.5 L543.9,401.75 L540,405 Z M547.8,398.5 L543.9,401.75 L547.8,405 Z" fill="#f0f0f6"/><rect x="351" y="326" width="1.6" height="130" fill="#f0f0f6"/><path d="M348,321.5 H355.6 V326 L351.8,329 L348,326 Z" fill="#f8f8fc"/><rect x="731.2" y="72" width="11.4" height="7.8" rx="1.6" fill="none" stroke="#c8c8d2" stroke-width="1" stroke-linecap="round" stroke-linejoin="round"/><path d="M724.5,98 H749.5" stroke="#34343e" stroke-width="1"/><path d="M731.5,110 H733.5 L737,107.8 V116 L733.5,113.8 H731.5 Z M739.2,110 Q740.3,111.9 739.2,113.8 M741.2,108.8 Q743.2,111.9 741.2,115" fill="none" stroke="#c8c8d2" stroke-width="1" stroke-linecap="round" stroke-linejoin="round"/><path d="M731.8,152.3 L739,145.1 M739.4,142.5 L740,144 L741.5,144.5 L740,145.1 L739.4,146.6 L738.8,145.1 L737.3,144.5 L738.8,144" fill="none" stroke="#c8c8d2" stroke-width="1" stroke-linecap="round" stroke-linejoin="round"/><path d="M733,147 L733.3,147.9 M741.5,149.5 L741.8,150.3" fill="none" stroke="#c8c8d2" stroke-width="1" stroke-linecap="round" stroke-linejoin="round"/><circle cx="737" cy="182" r="5.3" fill="none" stroke="#c8c8d2" stroke-width="1" stroke-linecap="round" stroke-linejoin="round"/><path d="M737,176.7 A5.3,5.3 0 0 1 737,187.3 Z" fill="#6c6c7a"/><circle cx="737" cy="218.6" r="5.3" fill="none" stroke="#c8c8d2" stroke-width="1" stroke-linecap="round" stroke-linejoin="round"/><path d="M737,213.3 A5.3,5.3 0 0 1 737,223.9 Z" fill="#c8c8d2"/><path d="M731.8,257.6 A5.5,5.5 0 0 1 742.6,257.6" fill="none" stroke="#c8c8d2" stroke-width="1.5" stroke-linecap="round"/><path d="M736.5,258.2 L738.9,252.8" fill="none" stroke="#c8c8d2" stroke-width="1.6" stroke-linecap="round"/><rect x="732" y="285.3" width="10.6" height="10.3" rx="1.5" fill="#c8c8d2"/><path d="M734,287.5 L737.3,290.45 L734,293.4 Z M740.6,287.5 L737.3,290.45 L740.6,293.4 Z" fill="#1f1f29"/><path d="M733.6,327.3 Q731.2,326.6 731.8,323.2 Q732.8,319.6 737.3,319.6 Q742.3,319.9 742.6,325 Q742.6,330 738.2,330.6 Q736.4,330.6 736.3,329 Q736.1,327.5 733.6,327.3 Z" fill="none" stroke="#c8c8d2" stroke-width="1" stroke-linecap="round" stroke-linejoin="round"/><circle cx="735" cy="323.2" r="0.8" fill="#c8c8d2"/><circle cx="738.4" cy="322.8" r="0.8" fill="#c8c8d2"/><circle cx="740.2" cy="326" r="0.8" fill="#c8c8d2"/></svg><div class="t" style="left:676.60px;width:120px;text-align:center;top:87.34px;font-size:5.15px;color:#b4b4c0;font-weight:400;font-family:'Liberation Sans';transform:scaleY(1.08);transform-origin:0 4.36px;-webkit-text-stroke:0.12px #b4b4c0;">Captions</div><div class="t" style="left:676.60px;width:120px;text-align:center;top:122.30px;font-size:5.2px;color:#b4b4c0;font-weight:400;font-family:'Liberation Sans';transform:scaleY(1.08);transform-origin:0 4.40px;-webkit-text-stroke:0.12px #b4b4c0;">Audio</div><div class="t" style="left:676.60px;width:120px;text-align:center;top:157.60px;font-size:5.2px;color:#b4b4c0;font-weight:400;font-family:'Liberation Sans';transform:scaleY(1.08);transform-origin:0 4.40px;-webkit-text-stroke:0.12px #b4b4c0;">Filters</div><div class="t" style="left:676.60px;width:120px;text-align:center;top:193.60px;font-size:5.2px;color:#b4b4c0;font-weight:400;font-family:'Liberation Sans';transform:scaleY(1.08);transform-origin:0 4.40px;-webkit-text-stroke:0.12px #b4b4c0;">Fade</div><div class="t" style="left:676.60px;width:120px;text-align:center;top:229.06px;font-size:5.25px;color:#b4b4c0;font-weight:400;font-family:'Liberation Sans';transform:scaleY(1.08);transform-origin:0 4.44px;-webkit-text-stroke:0.12px #b4b4c0;">Adjust colors</div><div class="t" style="left:676.60px;width:120px;text-align:center;top:265.60px;font-size:5.2px;color:#b4b4c0;font-weight:400;font-family:'Liberation Sans';transform:scaleY(1.08);transform-origin:0 4.40px;-webkit-text-stroke:0.12px #b4b4c0;">Speed</div><div class="t" style="left:676.60px;width:120px;text-align:center;top:301.10px;font-size:5.2px;color:#b4b4c0;font-weight:400;font-family:'Liberation Sans';transform:scaleY(1.08);transform-origin:0 4.40px;-webkit-text-stroke:0.12px #b4b4c0;">Transition</div><div class="t" style="left:676.60px;width:120px;text-align:center;top:336.90px;font-size:5.2px;color:#b4b4c0;font-weight:400;font-family:'Liberation Sans';transform:scaleY(1.08);transform-origin:0 4.40px;-webkit-text-stroke:0.12px #b4b4c0;">Colors</div></body></html>
